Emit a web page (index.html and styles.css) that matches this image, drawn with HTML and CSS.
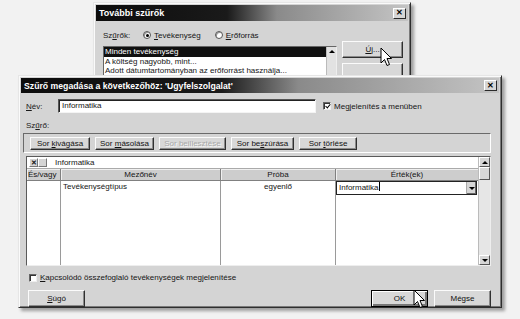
FILE: index.html
```html
<!DOCTYPE html>
<html>
<head>
<meta charset="utf-8">
<link rel="stylesheet" href="styles.css">
</head>
<body>
<div class="win back">
  <div class="title"><span>További szűrők</span><span class="xbtn">✕</span></div>
  <div class="back-body">
    <div class="radios">
      <span class="lbl">Sz<u>ű</u>rők:</span>
      <span class="radio on"></span><span class="rtext"><u>T</u>evékenység</span>
      <span class="radio"></span><span class="rtext"><u>E</u>rőforrás</span>
    </div>
    <div class="back-main">
      <div class="list">
        <div class="items">
          <div class="item sel">Minden tevékenység</div>
          <div class="item">A költség nagyobb, mint...</div>
          <div class="item">Adott dátumtartományban az erőforrást használja...</div>
        </div>
        <div class="vscroll"><span class="arr up"></span></div>
      </div>
      <div class="side">
        <div class="btn new"><span><u>Ú</u>j...</span></div>
        <div class="btn"></div>
      </div>
    </div>
  </div>
</div>

<div class="win front">
  <div class="title"><span>Szűrő megadása a következőhöz: 'Ugyfelszolgalat'</span><span class="xbtn">✕</span></div>
  <div class="front-body">
    <div class="namerow">
      <span class="lbl name"><u>N</u>év:</span>
      <div class="input">Informatika</div>
      <span class="check on"></span><span class="ctext">Me<u>g</u>jelenítés a menüben</span>
    </div>
    <div class="lbl filt">Sz<u>ű</u>rő:</div>
    <div class="toolbar">
      <div class="btn tb"><span>Sor <u>k</u>ivágása</span></div>
      <div class="btn tb"><span>Sor <u>m</u>ásolása</span></div>
      <div class="btn tb dis"><span>Sor beillesztése</span></div>
      <div class="btn tb"><span>Sor be<u>s</u>zúrása</span></div>
      <div class="btn tb"><span>Sor <u>t</u>örlése</span></div>
    </div>
    <div class="gridbox">
      <div class="gridmain">
        <div class="expr">
          <span class="ico x">✕</span><span class="ico"></span>
          <span class="exprtext">Informatika</span>
        </div>
        <div class="table">
          <div class="hd left">És/vagy</div>
          <div class="hd">Mezőnév</div>
          <div class="hd">Próba</div>
          <div class="hd last">Érték(ek)</div>
          <div class="cell"></div>
          <div class="cell">Tevékenységtípus</div>
          <div class="cell test">egyenlő</div>
          <div class="cell last"><div class="combo"><span>Informatika<span class="caret"></span></span><span class="dd"><span class="arr down"></span></span></div></div>
          <div class="fill"></div>
          <div class="fill"></div>
          <div class="fill"></div>
          <div class="fill last"></div>
        </div>
      </div>
      <div class="vscroll big">
        <span class="sbtn"><span class="arr up"></span></span>
        <span class="thumb"></span>
        <span class="track"></span>
        <span class="sbtn"><span class="arr down"></span></span>
      </div>
    </div>
    <div class="sumrow"><span class="check"></span><span class="ctext"><u>K</u>apcsolódó összefoglaló tevékenységek megjelenítése</span></div>
    <div class="btnrow">
      <div class="btn foot"><span><u>S</u>úgó</span></div>
      <div class="spacer"></div>
      <div class="btn foot def">OK</div>
      <div class="btn foot">Mégse</div>
    </div>
  </div>
</div>

<svg class="cursor c1" width="13" height="20" viewBox="0 0 13 20"><path d="M1 1 L1 16 L4.5 12.5 L7 18.5 L9.5 17.5 L7 11.5 L11.5 11.5 Z" fill="#fff" stroke="#000" stroke-width="1"/></svg>
<svg class="cursor c2" width="13" height="20" viewBox="0 0 13 20"><path d="M1 1 L1 16 L4.5 12.5 L7 18.5 L9.5 17.5 L7 11.5 L11.5 11.5 Z" fill="#fff" stroke="#000" stroke-width="1"/></svg>
</body>
</html>
```
FILE: styles.css
```css
* { box-sizing: border-box; margin: 0; padding: 0; }
body {
  width: 520px; height: 319px; overflow: hidden; position: relative;
  background: #f2f2f2;
  font-family: "Liberation Sans", sans-serif;
  font-size: 8px; color: #151515;
}
u { text-decoration: underline; }

.win {
  position: absolute;
  background: #d4d4d4;
  border: 1px solid; border-color: #e6e6e6 #2e2e2e #2e2e2e #e6e6e6;
  box-shadow: inset 1px 1px 0 #fafafa, inset -1px -1px 0 #7a7a7a, 3px 3px 3px rgba(0,0,0,.35);
}
.back { left: 93px; top: 2px; width: 318px; height: 96px; }
.front { left: 18px; top: 75px; width: 484px; height: 233px; display: flex; flex-direction: column; }

.title {
  margin: 2px 2px 0; height: 16px; flex: none;
  display: flex; align-items: center; justify-content: space-between;
  padding: 0 2px 0 3px; color: #fff; font-weight: bold;
  font-family: "Liberation Sans", sans-serif; font-size: 9px;
  background: linear-gradient(90deg, #0c0c0c 0%, #1a1a1a 42%, #8a8a8a 58%, #c4c4c4 100%);
}
.front .title { height: 15px; font-size: 8.7px; }
.xbtn {
  width: 13px; height: 11px; background: #d6d6d6; color: #000;
  border: 1px solid; border-color: #fff #2a2a2a #2a2a2a #fff;
  display: flex; align-items: center; justify-content: center;
  font-size: 8px; font-weight: bold; line-height: 1;
}

/* generic controls */
.btn {
  background: #d8d8d8; color: #111;
  border: 1px solid; border-color: #fbfbfb #303030 #303030 #fbfbfb;
  box-shadow: inset -1px -1px 0 #8a8a8a;
  display: flex; align-items: center; justify-content: center;
  white-space: nowrap;
}
.lbl { color: #1a1a1a; }
.radio {
  width: 8px; height: 8px; border-radius: 50%; background: #fff;
  border: 1px solid #555; box-shadow: inset 1px 1px 0 #999;
  display: inline-flex; align-items: center; justify-content: center; flex: none;
}
.radio.on::after { content: ""; width: 3px; height: 3px; border-radius: 50%; background: #000; }
.check {
  width: 8px; height: 8px; background: #fff; flex: none;
  border: 1px solid; border-color: #666 #eee #eee #666; box-shadow: inset 1px 1px 0 #333;
  position: relative;
}
.check.on::after {
  content: ""; position: absolute; left: 1px; top: 0px; width: 4px; height: 2px;
  border-left: 1.5px solid #000; border-bottom: 1.5px solid #000; transform: rotate(-50deg) translate(-0.5px, 1px);
}
.arr { width: 0; height: 0; border-left: 3px solid transparent; border-right: 3px solid transparent; }
.arr.up { border-bottom: 3px solid #000; }
.arr.down { border-top: 3px solid #000; }

/* back window */
.back-body { padding: 8px 6px 0 9px; }
.radios { display: flex; align-items: center; height: 12px; }
.radios .lbl { width: 40px; }
.radios .rtext { margin-left: 3px; margin-right: 14px; }
.back-main { display: flex; margin-top: 5px; gap: 5px; }
.list {
  width: 234px; height: 42px; background: #fff; display: flex;
  border: 1px solid; border-color: #666 #eee #eee #666;
}
.items { flex: 1; }
.item { height: 9.5px; line-height: 9.5px; padding-left: 1px; white-space: nowrap; }
.item.sel { background: #101010; color: #fff; }
.vscroll { width: 10px; background: #e2e2e2; display: flex; flex-direction: column; align-items: center; }
.list .vscroll { padding-top: 3px; border-left: 1px solid #bbb; }
.side { display: flex; flex-direction: column; gap: 5px; margin-top: -5px; }
.side .btn { width: 61px; height: 17px; }

/* front window */
.front-body { flex: 1; display: flex; flex-direction: column; padding: 6px 10px 0 7px; }
.namerow { display: flex; align-items: center; height: 14px; }
.name { width: 32px; }
.input {
  width: 258px; height: 14px; background: #fff; padding-left: 3px; line-height: 12px;
  border: 1px solid; border-color: #555 #f4f4f4 #f4f4f4 #555; box-shadow: inset 1px 1px 0 #222;
}
.namerow .check { margin-left: 7px; }
.ctext { margin-left: 3px; }
.filt { height: 9px; margin-top: 8px; line-height: 9px; }
.toolbar {
  margin: 3px 0 0 -3px; height: 20px; width: 468px;
  border: 1px solid; border-color: #6a6a6a #fff #fff #6a6a6a;
  display: flex; align-items: center; padding-left: 6px; gap: 5px;
}
.btn.tb { height: 13px; padding: 0 3px; }
.tb:nth-child(1) { width: 60px; }
.tb:nth-child(2) { width: 59px; }
.tb:nth-child(3) { width: 67px; }
.tb:nth-child(4) { width: 63px; }
.tb:nth-child(5) { width: 58px; }
.btn.dis { color: #a8a8a8; text-shadow: 1px 1px 0 #f6f6f6; }

.gridbox {
  margin-top: 3px; height: 110px; width: 465px; display: flex; background: #fff;
  border: 1px solid; border-color: #5a5a5a #eee #eee #5a5a5a;
}
.gridmain { flex: 1; display: flex; flex-direction: column; min-width: 0; }
.expr { height: 12px; display: flex; align-items: center; padding-left: 2px; border-bottom: 1px solid #aaa; }
.ico {
  width: 9px; height: 9px; background: #d4d4d4; font-size: 7px; line-height: 8px; text-align: center;
  border: 1px solid; border-color: #fff #777 #777 #fff; font-weight: bold;
}
.exprtext { margin-left: 8px; }
.table {
  flex: 1; display: grid;
  grid-template-columns: 34px 160px 115px minmax(0, 1fr);
  grid-template-rows: 12px 14px 1fr;
}
.hd {
  background: #cdcdcd; text-align: center; line-height: 11px;
  border-right: 1px solid #808080; border-bottom: 1px solid #808080; box-shadow: inset 1px 1px 0 #f0f0f0;
}
.hd.left { text-align: left; padding-left: 1px; }
.cell { border-right: 1px solid #9a9a9a; padding-left: 2px; line-height: 12px; white-space: nowrap; overflow: hidden; }
.cell.test { padding-left: 43px; }
.fill { border-right: 1px solid #9a9a9a; }
.last { border-right: none; }
.cell.last { padding: 0 1px 0 0; }
.combo {
  height: 14px; display: flex; justify-content: space-between; background: #fff;
  border: 1px solid #222; padding-left: 2px; line-height: 12px;
}
.caret { display: inline-block; width: 1px; height: 9px; background: #000; vertical-align: -1px; }
.dd { width: 10px; background: #d6d6d6; border-left: 1px solid #aaa; display: flex; align-items: center; justify-content: center; box-shadow: inset -1px -1px 0 #666; }
.vscroll.big { width: 12px; border-left: 1px solid #bbb; background: #e6e6e6; }
.sbtn {
  width: 11px; height: 10px; background: #d6d6d6; display: flex; align-items: center; justify-content: center;
  border: 1px solid; border-color: #fff #555 #555 #fff; flex: none;
}
.thumb { width: 11px; height: 13px; background: #d8d8d8; border: 1px solid; border-color: #fff #555 #555 #fff; flex: none; }
.track { flex: 1; }
.sumrow { display: flex; align-items: center; margin-top: 7px; padding-left: 3px; height: 9px; }
.btnrow { display: flex; margin-top: 8px; padding-left: 2px; gap: 6px; }
.btn.foot { width: 57px; height: 17px; }
.btn.def { border: 1px solid #000; box-shadow: inset 1px 1px 0 #fff, inset -2px -2px 0 #777; }
.spacer { flex: 1; }

.cursor { position: absolute; }
.c1 { left: 380px; top: 47px; }
.c2 { left: 413px; top: 289px; }
```
